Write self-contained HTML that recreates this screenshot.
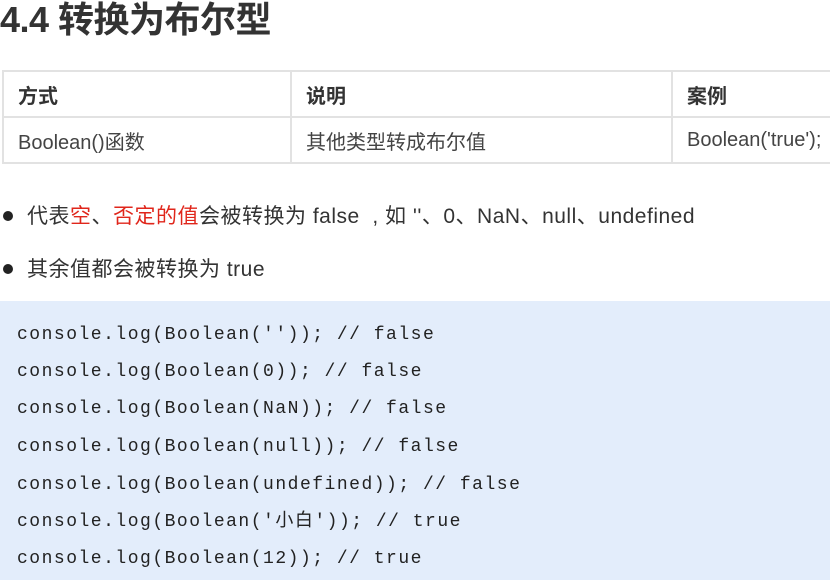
<!DOCTYPE html>
<html><head><meta charset="utf-8"><style>
*{margin:0;padding:0;box-sizing:border-box}
body{width:830px;height:580px;overflow:hidden;background:#fff;position:relative;font-family:"Liberation Sans","Noto Sans CJK SC",sans-serif;color:#333}
.t{position:absolute;left:0;top:-2px;font-size:36px;font-weight:bold;color:#333;line-height:44px;letter-spacing:-0.5px}
table{position:absolute;left:2px;top:70px;border-collapse:collapse;width:860px}
td{border:2px solid #e2e2e2;height:46px;padding-left:14px;font-size:20px;color:#444;vertical-align:middle}
th{border:2px solid #e2e2e2;height:46px;padding-left:14px;font-size:20px;text-align:left;color:#333;font-weight:bold}
.b{position:absolute;left:0;font-size:21px;color:#333;line-height:26px;white-space:nowrap;letter-spacing:0.5px}
.b:before{content:"";display:inline-block;width:10px;height:10px;border-radius:50%;background:#222;margin:0 14px 3px 3px;vertical-align:middle}
.r{color:#e0261b}
.code{position:absolute;left:0;top:301px;width:830px;height:279px;background:#e3edfb}
.l{position:absolute;left:17px;font-family:"Liberation Mono","Noto Sans CJK SC",monospace;font-size:18px;letter-spacing:1.5px;color:#222;white-space:pre;line-height:22px}
</style></head><body>
<div class="t">4.4 转换为布尔型</div>
<table>
<tr><th style="width:288px">方式</th><th style="width:381px">说明</th><th>案例</th></tr>
<tr><td>Boolean()函数</td><td>其他类型转成布尔值</td><td>Boolean('true');</td></tr>
</table>
<div class="b" style="top:204px">代表<span class="r">空</span>、<span class="r">否定的值</span>会被转换为 false &nbsp;, 如 ''、0、NaN、null、undefined</div>
<div class="b" style="top:257px">其余值都会被转换为 true</div>
<div class="code">
<div class="l" style="top:23px">console.log(Boolean('')); // false</div>
<div class="l" style="top:60px">console.log(Boolean(0)); // false</div>
<div class="l" style="top:97px">console.log(Boolean(NaN)); // false</div>
<div class="l" style="top:135px">console.log(Boolean(null)); // false</div>
<div class="l" style="top:173px">console.log(Boolean(undefined)); // false</div>
<div class="l" style="top:210px">console.log(Boolean('小白')); // true</div>
<div class="l" style="top:247px">console.log(Boolean(12)); // true</div>
</div>
</body></html>
